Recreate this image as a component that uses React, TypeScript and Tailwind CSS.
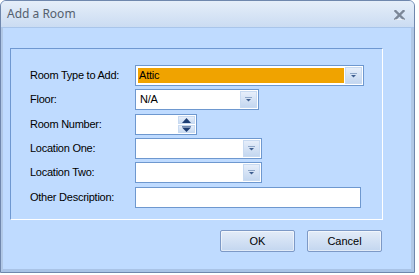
import React from "react";

const labelFont = { fontFamily: '"Liberation Sans", Arial, sans-serif' };

function DropArrow() {
  return (
    <svg width="7" height="5" viewBox="0 0 7 5" className="block">
      <rect x="0" y="0" width="7" height="1" fill="#8fa7c8" />
      <path d="M1 2 H6 L3.5 4.6 Z" fill="#3e5e8f" />
    </svg>
  );
}

function DropButton() {
  return (
    <div className="w-[17px] h-full border border-[#c8daf1] bg-gradient-to-b from-[#e6eefa] to-[#c4d7f0] flex items-center justify-center">
      <DropArrow />
    </div>
  );
}

function Combo({ w, text, selected }: { w: string; text?: string; selected?: boolean }) {
  return (
    <div className={`${w} h-[21px] border border-[#6e98cf] bg-white flex items-stretch p-[1px]`}>
      <div className="flex-1 p-[1px] flex">
        {selected ? (
          <div className="flex-1 bg-[#f0a300] flex items-center pl-[1px] text-[11px] tracking-[-0.2px] text-black" style={labelFont}>
            {text}
          </div>
        ) : (
          <div className="flex-1 flex items-center pl-[2px] text-[11px] tracking-[-0.2px] text-black" style={labelFont}>
            {text}
          </div>
        )}
      </div>
      <DropButton />
    </div>
  );
}

function Spin() {
  return (
    <div className="w-[62px] h-[21px] border border-[#6e98cf] bg-white flex items-stretch p-[1px]">
      <div className="flex-1" />
      <div className="w-[17px] flex flex-col gap-[1px]">
        <div className="flex-1 border border-[#c8daf1] bg-gradient-to-b from-[#e6eefa] to-[#c9dbf2] flex items-center justify-center">
          <svg width="9" height="5" viewBox="0 0 9 5" className="block">
            <path d="M0 5 H9 L4.5 0 Z" fill="#1d3d73" />
          </svg>
        </div>
        <div className="flex-1 border border-[#c8daf1] bg-gradient-to-b from-[#e6eefa] to-[#c9dbf2] flex items-center justify-center">
          <svg width="9" height="6" viewBox="0 0 9 6" className="block">
            <rect x="0" y="0" width="9" height="1" fill="#6f88ad" />
            <path d="M0 1.5 H9 L4.5 6 Z" fill="#1d3d73" />
          </svg>
        </div>
      </div>
    </div>
  );
}

function Row({ label, children, mb }: { label: string; children: React.ReactNode; mb: string }) {
  return (
    <div className={`flex items-center ${mb}`}>
      <div className="w-[105px] text-[11px] tracking-[-0.25px] text-black leading-none" style={labelFont}>
        {label}
      </div>
      {children}
    </div>
  );
}

function Btn({ text }: { text: string }) {
  return (
    <div
      className="w-[75px] h-[22px] rounded-[2px] border border-[#7d99c6] bg-gradient-to-b from-[#e3ecf8] via-[#d3e1f4] to-[#c3d6ef] flex items-center justify-center text-[11px] text-black shadow-[inset_0_0_0_1px_rgba(255,255,255,0.5)]"
      style={labelFont}
    >
      {text}
    </div>
  );
}

export default function App() {
  return (
    <div className="w-[419px] h-[275px] bg-white relative">
      <div className="w-[415px] h-[273px] rounded-t-[6px] border border-[#6f87ad] overflow-hidden flex flex-col bg-[#bfdbff]">
        <div className="h-[27px] shrink-0 bg-gradient-to-b from-[#e5eef9] to-[#cbdcf2] border-b border-[#a9c5ea] flex items-center justify-between pl-[6px] pr-[9px]">
          <span className="text-[12px] text-[#55606e] leading-none" style={{ fontFamily: '"Noto Sans", "Open Sans", sans-serif' }}>
            Add a Room
          </span>
          <svg width="11" height="10" viewBox="0 0 11 10" className="block mt-[1px]">
            <path d="M1.5 1 L9.5 9 M9.5 1 L1.5 9" stroke="#7c8797" strokeWidth="2.4" strokeLinecap="square" />
            <path d="M1 9.6 H10" stroke="#ffffff" strokeWidth="0.8" opacity="0.8" />
          </svg>
        </div>
        <div className="flex-1 flex flex-col border-l-[2px] border-l-[#b1c8e6] border-r-[3px] border-r-[#b1c8e6] border-b-[3px] border-b-[#a9c3e6]">
          <div className="ml-[7px] mt-[20px] w-[373px] h-[172px] border-t border-l border-[#6f98d1] border-r border-r-white border-b border-b-white pt-[16px] pl-[19px]">
            <Row label="Room Type to Add:" mb="mb-[3px]">
              <Combo w="w-[229px]" text="Attic" selected />
            </Row>
            <Row label="Floor:" mb="mb-[4px]">
              <Combo w="w-[124px]" text="N/A" />
            </Row>
            <Row label="Room Number:" mb="mb-[3px]">
              <Spin />
            </Row>
            <Row label="Location One:" mb="mb-[3px]">
              <Combo w="w-[127px]" />
            </Row>
            <Row label="Location Two:" mb="mb-[4px]">
              <Combo w="w-[127px]" />
            </Row>
            <Row label="Other Description:" mb="mb-0">
              <div className="w-[226px] h-[21px] border border-[#6e98cf] bg-white" />
            </Row>
          </div>
          <div className="flex gap-[12px] ml-[217px] mt-[10px]">
            <Btn text="OK" />
            <Btn text="Cancel" />
          </div>
        </div>
      </div>
    </div>
  );
}
